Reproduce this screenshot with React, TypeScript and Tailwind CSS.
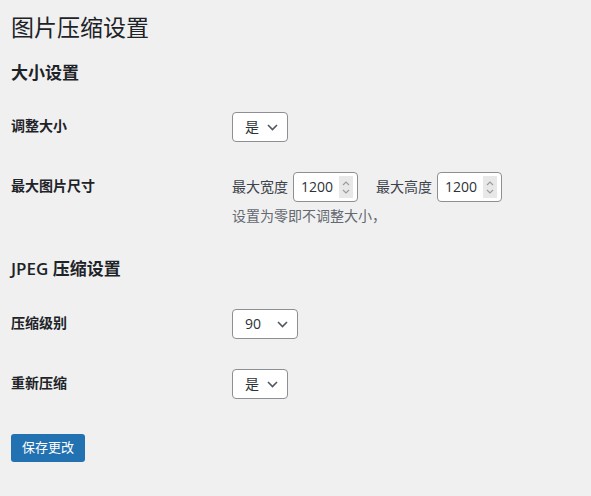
import React from "react";

const font = {
  fontFamily: '"Open Sans", "Noto Sans CJK SC", sans-serif',
};

function Chevron() {
  return (
    <svg width="11" height="7" viewBox="0 0 11 7" className="shrink-0">
      <path d="M1 1 L5.5 5.5 L10 1" fill="none" stroke="#50575e" strokeWidth="1.6" />
    </svg>
  );
}

function FakeSelect({ value, width }: { value: string; width: string }) {
  return (
    <div
      className={`${width} h-[30px] flex items-center justify-between pl-[12px] pr-[9px] bg-white border border-[#8c8f94] rounded-[4px] text-[14px] text-[#2c3338]`}
    >
      <span className="leading-[18px]">{value}</span>
      <Chevron />
    </div>
  );
}

function NumberInput({ value }: { value: string }) {
  return (
    <div className="w-[65px] h-[30px] flex items-center justify-between pl-[7px] pr-[4px] bg-white border border-[#8c8f94] rounded-[4px] text-[14px] text-[#2c3338]">
      <span className="leading-[18px]">{value}</span>
      <div className="w-[14px] h-[22px] bg-[#e8e8e8] flex flex-col items-center justify-center gap-[3px]">
        <svg width="8" height="5" viewBox="0 0 8 5">
          <path d="M1 4 L4 1 L7 4" fill="none" stroke="#9a9a9a" strokeWidth="1.1" />
        </svg>
        <svg width="8" height="5" viewBox="0 0 8 5">
          <path d="M1 1 L4 4 L7 1" fill="none" stroke="#9a9a9a" strokeWidth="1.1" />
        </svg>
      </div>
    </div>
  );
}

function Row({ label, children }: { label: string; children: React.ReactNode }) {
  return (
    <div className="flex">
      <div className="w-[221px] pt-[20px] pb-[20px] text-[14px] leading-[18px] font-semibold text-[#1d2327]">
        {label}
      </div>
      <div className="py-[15px]">{children}</div>
    </div>
  );
}

export default function App() {
  return (
    <div
      className="w-[591px] h-[496px] bg-[#f0f0f1] pl-[11px] pt-[12px] text-[#1d2327] overflow-hidden"
      style={font}
    >
      <h1 className="text-[23px] leading-[30px] font-normal">图片压缩设置</h1>
      <h2 className="mt-[19px] text-[17px] leading-[24px] font-semibold">大小设置</h2>
      <div className="mt-[12px]">
        <Row label="调整大小">
          <FakeSelect value="是" width="w-[56px]" />
        </Row>
        <Row label="最大图片尺寸">
          <div className="flex items-center text-[14px] text-[#3c434a]">
            <span className="leading-[18px]">最大宽度</span>
            <div className="ml-[5px]">
              <NumberInput value="1200" />
            </div>
            <span className="ml-[18px] leading-[18px]">最大高度</span>
            <div className="ml-[5px]">
              <NumberInput value="1200" />
            </div>
          </div>
          <p className="mt-[4px] text-[14px] leading-[20px] text-[#646970]">设置为零即不调整大小，</p>
        </Row>
      </div>
      <h2 className="mt-[16px] text-[17px] leading-[24px] font-semibold">JPEG 压缩设置</h2>
      <div className="mt-[13px]">
        <Row label="压缩级别">
          <FakeSelect value="90" width="w-[66px]" />
        </Row>
        <Row label="重新压缩">
          <FakeSelect value="是" width="w-[56px]" />
        </Row>
      </div>
      <button className="mt-[20px] w-[74px] h-[28px] bg-[#2271b1] text-white text-[13px] rounded-[3px] flex items-center justify-center">
        保存更改
      </button>
    </div>
  );
}
